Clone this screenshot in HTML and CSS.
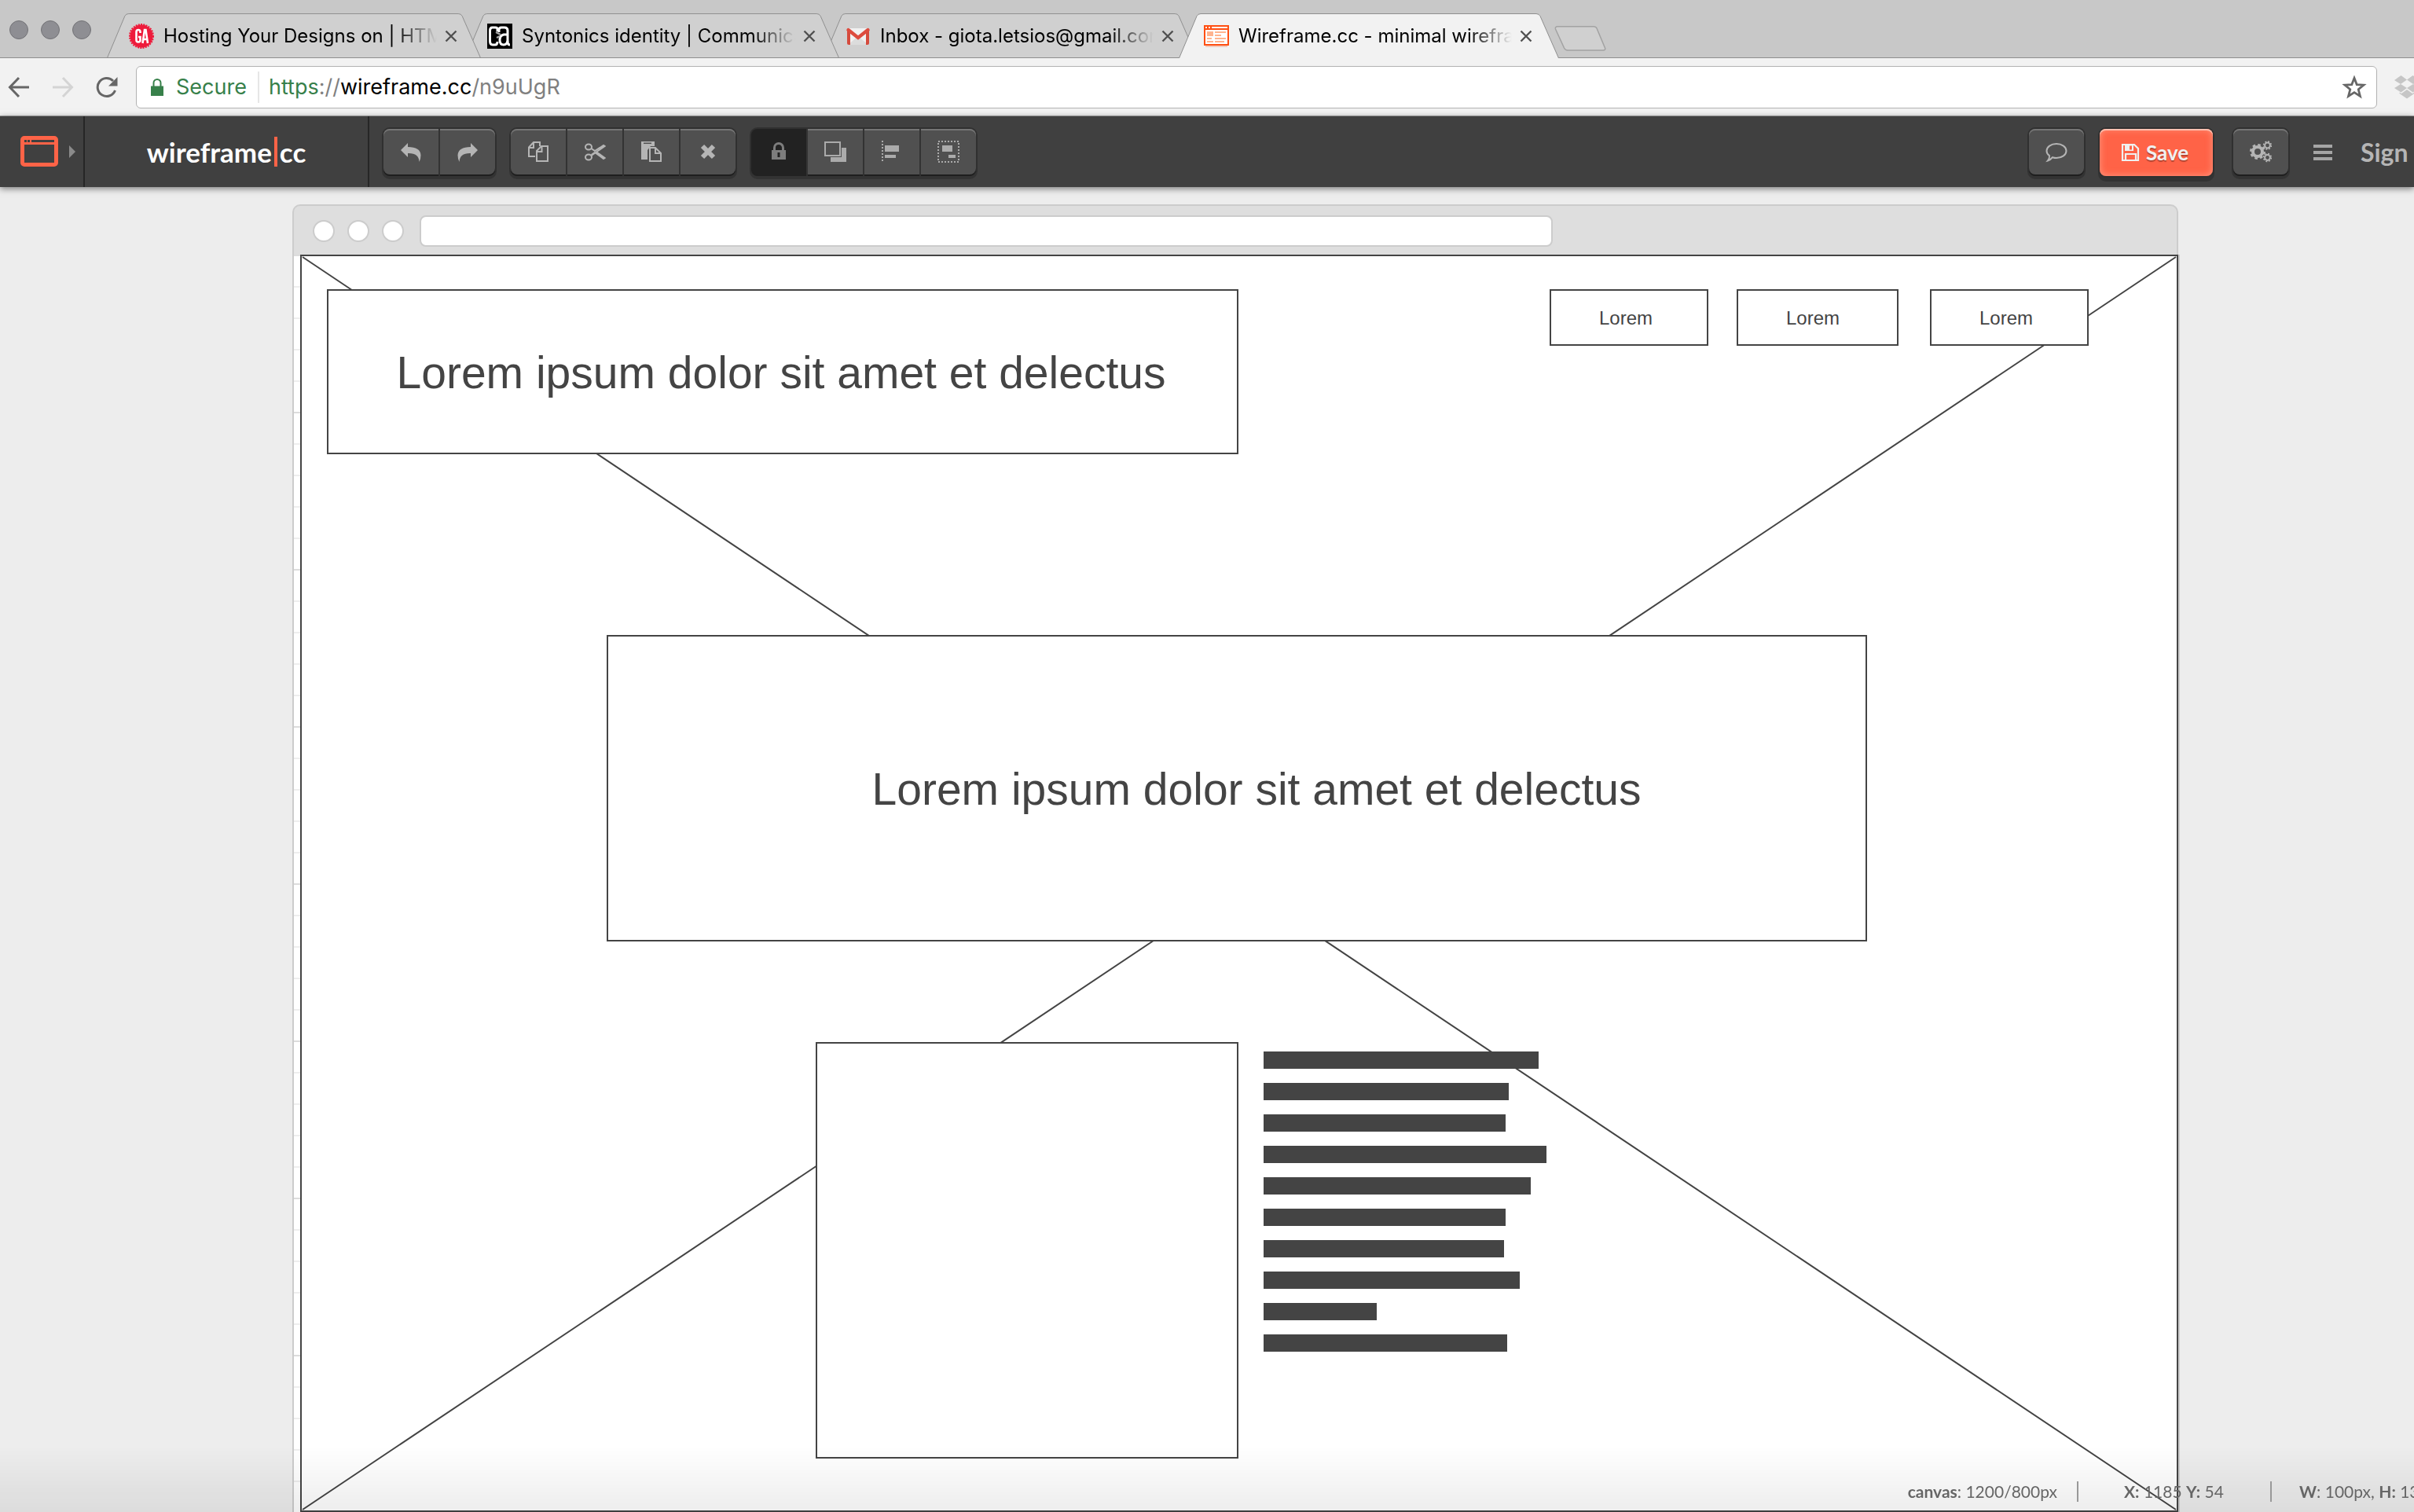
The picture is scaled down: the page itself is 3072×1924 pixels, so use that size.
FILE: index.html
```html
<!DOCTYPE html>
<html lang="en">
<head>
<meta charset="utf-8">
<title>Wireframe.cc - minimal wireframing tool</title>
<link rel="stylesheet" href="styles.css">
</head>
<body>
<svg class="defs" aria-hidden="true">
  <symbol id="tab-shape" viewBox="0 0 484 57"><path d="M.5 57L23 3.500Q24.500.5 28 .5H455Q458.500.5 460 3.500L483.500 57"/></symbol>
  <symbol id="close" viewBox="0 0 16 16"><path d="M1.500 1.500l13 13M14.500 1.500l-13 13" fill="none" stroke="#505050" stroke-width="2.400"/></symbol>
</svg>

<header class="browser">
  <div class="tab-strip">
    <div class="lights"><span></span><span></span><span></span></div>
    <nav class="tabs">
      <div class="tab">
        <svg class="tab-bg"><use href="#tab-shape"/></svg>
        <svg class="favicon" viewBox="0 0 32 32"><circle cx="16" cy="16" r="14.500" fill="#ee1b3b"/><circle cx="16" cy="16" r="15" fill="none" stroke="#ee1b3b" stroke-width="2" stroke-dasharray="2 1.300"/><g fill="none" stroke="#fff" stroke-width="2.600"><path d="M14.500 12v-1.500q0-2.500-2.500-2.500T9.500 10.500v10.500q0 2.500 2.500 2.500t2.500-2.500V17H12"/><path d="M17.500 25L20 8h1.500L24 25M18.500 20h4.500"/></g></svg>
        <a class="tab-title" href="#">Hosting Your Designs on | HTML</a>
        <button class="tab-close" aria-label="Close tab"><svg><use href="#close"/></svg></button>
      </div>
      <div class="tab">
        <svg class="tab-bg"><use href="#tab-shape"/></svg>
        <svg class="favicon" viewBox="0 0 32 32"><path d="M0 0h32v32H0z"/><g fill="none" stroke="#fff" stroke-width="3"><path d="M13 10V7q0-2-2.500-2H6.500Q3.500 5 3.500 9v13q0 5 3.500 5h3q3 0 3-4"/><path d="M15 11V8q0-3 3-3h4q4 0 4 4v14q0 4 3 4"/><path d="M26 14h-5q-5 1-5 7t5 6q4 0 5-5"/></g><path d="M11 11l6 3M12 18l4-2" stroke="#aaa" stroke-width="2"/></svg>
        <a class="tab-title" href="#">Syntonics identity | Communication</a>
        <button class="tab-close" aria-label="Close tab"><svg><use href="#close"/></svg></button>
      </div>
      <div class="tab">
        <svg class="tab-bg"><use href="#tab-shape"/></svg>
        <svg class="favicon" viewBox="0 0 32 32"><path d="M3 6h26v21H3z" fill="#f1f1f1"/><path d="M3 27l13-11 13 11z" fill="#dcdcdc"/><path d="M2 8v17q0 2 2 2h2V11zM30 8v17q0 2-2 2h-2V11z" fill="#d54b3d"/><path d="M3.500 8L16 18 28.500 8" fill="none" stroke="#dd4b3e" stroke-width="4.400" stroke-linecap="round"/></svg>
        <a class="tab-title" href="#">Inbox - giota.letsios@gmail.com</a>
        <button class="tab-close" aria-label="Close tab"><svg><use href="#close"/></svg></button>
      </div>
      <div class="tab active">
        <svg class="tab-bg"><use href="#tab-shape"/></svg>
        <svg class="favicon" viewBox="0 0 32 32"><path d="M2 28h28v2H2z" fill="#f3c9bb"/><path d="M0 2h32v26H0z" fill="#ff4f12"/><path d="M2 4h2v2H2zM6 4h2v2H6zM10 4h20v2H10zM2 8h28v18H2z" fill="#fff"/><path d="M4 10h8v6H4zM14 10h14v2H14zM14 14h8v2h-8zM4 18h6v2H4zM14 18h14v2H14zM4 22h8v2H4zM14 22h12v2H14z" fill="#ffb48f"/></svg>
        <a class="tab-title" href="#">Wireframe.cc - minimal wireframing</a>
        <button class="tab-close" aria-label="Close tab"><svg><use href="#close"/></svg></button>
      </div>
    </nav>
    <button class="new-tab" aria-label="New tab"><svg viewBox="0 0 66 32"><path d="M4 .8H50Q53 .8 54 3L64.500 28Q65.500 31 62 31H17Q14 31 12.500 28L1.500 4Q.8.8 4 .8z" fill="#d0d0d0" stroke="#a2a2a2" stroke-width="1.500"/></svg></button>
  </div>

  <div class="nav-bar">
    <button class="nav-btn" aria-label="Back"><svg viewBox="0 0 28 28"><path d="M27 14H3M14 2L2.500 14 14 26" fill="none" stroke="#666" stroke-width="3"/></svg></button>
    <button class="nav-btn" aria-label="Forward"><svg viewBox="0 0 28 28"><path d="M1 14h24M14 2l11.500 12L14 26" fill="none" stroke="#d4d4d4" stroke-width="3"/></svg></button>
    <button class="nav-btn" aria-label="Reload"><svg viewBox="0 0 28 28"><path d="M24.500 18A11.500 11.500 0 1 1 22 6" fill="none" stroke="#666" stroke-width="3"/><path d="M27.500 1v11.500H16z" fill="#666"/></svg></button>
    <div class="address">
      <svg class="lock" viewBox="0 0 18 22"><path d="M1 9.500h16V22H1z" fill="#37804a"/><path d="M4.500 10V5.500a4.500 4.500 0 0 1 9 0V10" fill="none" stroke="#37804a" stroke-width="2"/></svg>
      <span class="secure">Secure</span>
      <a class="url" href="#"><span class="scheme">https</span>://<span class="host">wireframe.cc</span>/n9uUgR</a>
      <button class="star" aria-label="Bookmark"><svg viewBox="0 0 30 30"><path d="M15 4l3 7.800 8.300.5-6.400 5.300 2.100 8.100L15 21.200l-7 4.500 2.100-8.100-6.400-5.300 8.300-.5z" fill="none" stroke="#666" stroke-width="2.600"/></svg></button>
    </div>
    <button class="extension" aria-label="Dropbox"><svg viewBox="0 0 34 32"><path d="M9.500 1L17 6.500 9 12 1 7zM24.500 1L17 6.500 25 12l8-5zM1 17l8-5 8 5-7.500 5.500zM33 17l-8-5-8 5 7.500 5.500zM17 19l7 5 2.500-1.500V24L17 30.500 7.500 24v-1.500L10 24z" fill="#c6c6c6"/></svg></button>
  </div>
</header>

<div class="app-bar">
  <button class="mode" aria-label="Window type"><svg viewBox="0 0 72 40"><rect x="2.500" y="2.500" width="43" height="34" rx="2.500" fill="none" stroke="#ff6347" stroke-width="5"/><path d="M2 2h44v9H2z" fill="#ff6347"/><path d="M5 5h3v3H5zM9 5h3v3H9zM14 5h29v3H14z" fill="#404040"/><path d="M62 12v16l8-8z" fill="#8a8a8a"/></svg></button>
  <a class="brand" href="#">wireframe<i></i>cc</a>
  <div class="tools">
    <div class="group">
      <button aria-label="Undo"><svg viewBox="0 0 28 28"><path d="M1 12L10 3v5q16 0 16.500 10.500Q26.500 23 24.500 27 24 15.500 10 16v5z"/></svg></button>
      <button aria-label="Redo"><svg viewBox="0 0 28 28"><path d="M27 12L18 3v5Q2 8 1.500 18.500 1.500 23 3.500 27 4 15.500 18 16v5z"/></svg></button>
    </div>
    <div class="group">
      <button aria-label="Copy"><svg class="line" viewBox="0 0 28 28"><path d="M10 20H2V8.500L8 2h8v5M8 2v7H2M12 26V13l6-6h8v19zM18.500 7v7H12"/></svg></button>
      <button aria-label="Cut"><svg class="line" viewBox="0 0 28 28"><ellipse cx="6" cy="8" rx="4" ry="3.500"/><ellipse cx="6" cy="21" rx="4" ry="3.500"/><path d="M9.500 10L14 13 25 6l1.500 1L9.500 19M9.500 18l4.500-3 11 8 1.500-1-11-8"/></svg></button>
      <button aria-label="Paste"><svg viewBox="0 0 28 28"><path d="M1 1h17v6h-5l-4 5v12H1z"/><path d="M4 3.300h10" stroke="#505050" stroke-width="1.500"/><path class="line" d="M12 26V9h7l7 7v10zM19 9v7h7"/></svg></button>
      <button aria-label="Delete"><svg viewBox="0 0 28 28"><path d="M7 7l14 14M21 7L7 21" stroke="#b5b5b5" stroke-width="6"/></svg></button>
    </div>
    <div class="group">
      <button class="on" aria-label="Lock"><svg viewBox="0 0 28 28"><path d="M5 12h18v12H5z" fill="#7d7d7d"/><path d="M8.500 13V9a5.500 5.500 0 0 1 11 0v4" fill="none" stroke="#7d7d7d" stroke-width="3"/><path d="M12.500 15h3v6h-3z" fill="#222"/></svg></button>
      <button aria-label="Arrange"><svg viewBox="0 0 28 28"><path d="M1 2h19v17H1z" fill="none" stroke="#ababab" stroke-width="2"/><path d="M22 9h6v18H8v-6h14z" fill="#ababab"/></svg></button>
      <button aria-label="Align"><svg viewBox="0 0 28 28"><path d="M2 0v28" stroke="#ababab" stroke-width="2" stroke-dasharray="2 2"/><path d="M5 6h18v8H5zM5 18h14v4H5z" fill="#ababab"/></svg></button>
      <button aria-label="Group"><svg viewBox="0 0 28 28"><path d="M1 1h26v26H1z" fill="none" stroke="#ababab" stroke-width="2" stroke-dasharray="2 2"/><path d="M6 6h13v8H6zM14 18h9v4h-9z" fill="#ababab"/></svg></button>
    </div>
  </div>
  <div class="actions">
    <div class="group"><button aria-label="Comment"><svg class="line" viewBox="0 0 28 28"><path d="M14 4c7 0 12.500 4 12.500 9S21 22 14 22c-2 0-3.500-.3-5-.8Q6.500 24.500 3 25.500 5.500 22.500 5 19C2.800 17.500 1.500 15.500 1.500 13 1.500 8 7 4 14 4z"/></svg></button></div>
    <button class="save"><svg viewBox="0 0 24 24"><path d="M2 2h15l5 5v15H2zM6 22v-8h13v8" fill="none" stroke="#f0f0f0" stroke-width="2.200"/><path d="M5 2h11v8H5z" fill="#f0f0f0"/><path d="M11 3.500h3v5h-3z" fill="#ff6347"/></svg>Save</button>
    <div class="group settings"><button aria-label="Settings"><svg viewBox="0 0 28 28"><g fill="none" stroke="#b5b5b5"><circle cx="10" cy="14" r="6" stroke-width="4"/><circle cx="10" cy="14" r="8.700" stroke-width="2.600" stroke-dasharray="3.600 3.230"/><circle cx="22.500" cy="6" r="3.400" stroke-width="2"/><circle cx="22.500" cy="6" r="4.900" stroke-width="1.600" stroke-dasharray="2 1.850"/><circle cx="22.500" cy="21.500" r="3.400" stroke-width="2"/><circle cx="22.500" cy="21.500" r="4.900" stroke-width="1.600" stroke-dasharray="2 1.850"/></g></svg></button></div>
    <button class="menu" aria-label="Menu"><span></span><span></span><span></span></button>
    <a class="sign-in" href="#">Sign in</a>
  </div>
</div>

<main class="workspace">
  <div class="frame-bar"><span class="dot"></span><span class="dot"></span><span class="dot"></span><span class="frame-url"></span></div>
  <div class="canvas">
    <svg class="backdrop" preserveAspectRatio="none" viewBox="0 0 2390 1600"><path d="M1 1L2389 1599M2389 1L1 1599"/></svg>
    <div class="node header-box">Lorem ipsum dolor sit amet et delectus</div>
    <div class="node link-box first">Lorem</div>
    <div class="node link-box second">Lorem</div>
    <div class="node link-box third">Lorem</div>
    <div class="node hero-box">Lorem ipsum dolor sit amet et delectus</div>
    <div class="node picture-box"></div>
    <div class="copy">
      <span style="width:350px"></span><span style="width:312px"></span><span style="width:308px"></span><span style="width:360px"></span><span style="width:340px"></span><span style="width:308px"></span><span style="width:306px"></span><span style="width:326px"></span><span style="width:144px"></span><span style="width:310px"></span>
    </div>
  </div>
</main>

<footer class="status">
  <span class="cell size"><b>canvas</b>: 1200/800px</span>
  <span class="cell pointer"><b>X:</b> 1185 <b>Y:</b> 54</span>
  <span class="cell selection"><b>W</b>: 100px, <b>H:</b> 135px</span>
</footer>
</body>
</html>
```
FILE: styles.css
```css
* { box-sizing: border-box; }
body { margin: 0; min-height: 100vh; background: #ededed; overflow-x: hidden; font-family: Lato, sans-serif; }
button { margin: 0; padding: 0; border: 0; background: none; font: inherit; color: inherit; }
a { color: inherit; text-decoration: none; }
svg { display: block; flex: none; }
.defs { position: absolute; width: 0; height: 0; }

/* Browser chrome */
.browser { font-family: Inter, sans-serif; }
.tab-strip { display: flex; height: 74px; padding-left: 12px; background: #c8c8c8; box-shadow: inset 0 -1px #8e8e8e; }
.lights { display: flex; gap: 16px; width: 120px; padding-top: 26px; }
.lights span { width: 24px; height: 24px; border: 1px solid #727276; border-radius: 50%; background: #8e8e93; }
.tabs { display: flex; align-items: flex-end; }
.tab { position: relative; display: flex; align-items: center; width: 484px; height: 57px; margin-right: -28px; padding: 0 34px 0 32px; z-index: 1; }
.tab:nth-child(1) { z-index: 3; }
.tab:nth-child(2) { z-index: 2; }
.tab.active { z-index: 4; }
.tab-bg { position: absolute; inset: 0; width: 484px; height: 56px; fill: #d0d0d0; stroke: #8e8e8e; z-index: -1; }
.active .tab-bg { height: 57px; fill: #f2f2f2; }
.favicon { width: 32px; height: 32px; }
.tab-title { flex: 1; margin: 0 10px 0 12px; overflow: hidden; white-space: nowrap; font-size: 24px; line-height: 32px; color: #000; -webkit-mask-image: linear-gradient(90deg, #000 84%, transparent); mask-image: linear-gradient(90deg, #000 84%, transparent); }
.tab-close svg { width: 16px; height: 16px; }
.new-tab { align-self: flex-start; margin: 33px 0 0 22px; }
.new-tab svg { width: 66px; height: 32px; }
.nav-bar { display: flex; align-items: center; height: 74px; padding-left: 10px; overflow: hidden; background: #f2f2f2; border-bottom: 1px solid #a8a8a8; }
.nav-btn { width: 28px; margin-right: 28px; }
.nav-btn svg { width: 28px; height: 28px; }
.nav-btn + .nav-btn + .nav-btn { margin-right: 23px; }
.address { flex: 1; display: flex; align-items: center; height: 54px; padding: 0 12px 0 17px; background: #fff; border: 1px solid #b2b2b2; border-radius: 6px; font-size: 27px; line-height: 40px; }
.lock { width: 18px; height: 22px; }
.secure { margin-left: 15px; padding-right: 14px; border-right: 2px solid #e6e6e6; color: #37804a; }
.url { flex: 1; margin-left: 12px; color: #808080; }
.scheme { color: #37804a; }
.host { color: #000; }
.star svg { width: 32px; height: 32px; }
.extension { width: 26px; margin-left: 21px; }
.extension svg { width: 34px; height: 32px; }

/* Application toolbar */
.app-bar { position: relative; display: flex; align-items: stretch; height: 90px; overflow: clip; overflow-clip-margin: 10px; background: #404040; box-shadow: 0 2px 8px rgba(0, 0, 0, .5); color: #fff; }
.mode { width: 108px; padding-left: 26px; border-right: 2px solid #262626; }
.mode svg { width: 72px; height: 40px; }
.brand { display: flex; align-items: center; justify-content: center; width: 362px; border-right: 2px solid #262626; font-size: 35px; line-height: 40px; font-weight: 700; }
.brand i { width: 4px; height: 38px; margin: 0 3px; background: #ff6347; }
.tools, .actions { display: flex; align-items: flex-start; gap: 20px; padding-top: 16px; }
.tools { padding-left: 18px; }
.group { display: flex; gap: 2px; height: 58px; border-radius: 8px; background: #333; box-shadow: 0 0 0 2px #303030, 0 4px 0 2px #333; }
.group button { display: flex; align-items: center; justify-content: center; width: 70px; background: #505050; box-shadow: inset 0 2px #757575, 0 2px #1e1e1e; }
.group button:first-child { border-radius: 8px 0 0 8px; }
.group button:last-child { border-radius: 0 8px 8px 0; }
.group button:only-child { border-radius: 8px; }
.group svg { width: 28px; height: 28px; fill: #b5b5b5; }
.group svg.line, .group path.line { fill: none; stroke: #b5b5b5; stroke-width: 2; }
.group path.line { fill: #505050; }
.group .on { background: #222; box-shadow: 0 2px #222; }
.actions { margin-left: auto; }
.save { display: flex; align-items: center; justify-content: center; gap: 8px; width: 144px; height: 60px; padding-right: 4px; border-radius: 8px; background: #ff6347; box-shadow: inset 0 2px #ffc0b0, inset 0 0 10px rgba(255, 190, 170, .6), 0 0 0 2px #303030, 0 5px 0 2px #333; color: #f0f0f0; font-size: 26px; font-weight: 700; text-shadow: 0 2px 1px rgba(0, 0, 0, .3); }
.save svg { width: 24px; height: 24px; }
.settings { margin-left: 6px; }
.menu { display: flex; flex-direction: column; gap: 4px; margin: 20px 0 0 12px; }
.menu span { width: 24px; height: 4px; background: #a5a5a5; }
.sign-in { width: 68px; margin: 10px 0 0 16px; white-space: nowrap; font-size: 32px; line-height: 40px; font-weight: 700; color: #b5b5b5; }

/* Wireframe */
.workspace { padding: 22px 298px 0 372px; }
.frame-bar { display: flex; align-items: center; gap: 16px; height: 64px; margin-right: 2px; padding: 4px 24px 2px; background: #dedede; border: 2px solid #ccc; border-bottom: 0; border-radius: 10px 10px 0 0; }
.dot { width: 28px; height: 28px; border: 2px solid #ccc; border-radius: 50%; background: #fff; }
.frame-url { width: 1442px; height: 40px; margin-left: 4px; border: 2px solid #ccc; border-radius: 8px; background: #fff; }
.canvas { position: relative; height: 1600px; border: 2px solid #ccc; border-width: 0 2px 0 2px; background: repeating-linear-gradient(transparent 0 198px, #dcdcdc 198px 200px), repeating-linear-gradient(#fff 0 38px, #eee 38px 40px); background-position: 0 2px; font-family: "Liberation Sans", Arial, sans-serif; color: #444; }
.backdrop { position: absolute; left: 8px; top: 0; width: calc(100% - 8px); height: 1600px; background: #fff; border: 2px solid #444; fill: none; stroke: #444; stroke-width: 2; }
.node { position: absolute; display: flex; align-items: center; justify-content: center; padding-top: 2px; white-space: nowrap; background: #fff; border: 2px solid #444; }
.header-box { left: 42px; top: 44px; width: 1160px; height: 210px; padding-right: 4px; font-size: 57px; }
.link-box { top: 44px; height: 72px; width: 202px; padding-right: 8px; font-size: 24px; }
.first { left: 1598px; }
.second { left: 1836px; width: 206px; padding-right: 12px; }
.third { left: 2082px; }
.hero-box { left: 398px; top: 484px; width: 1604px; height: 390px; padding-left: 50px; font-size: 57px; }
.picture-box { left: 664px; top: 1002px; width: 538px; height: 530px; }
.copy { position: absolute; left: 1234px; top: 1014px; display: grid; gap: 18px; }
.copy span { height: 22px; background: #444; }

/* Status line over the canvas */
.status { position: fixed; left: 0; right: 0; bottom: 0; display: flex; justify-content: flex-end; align-items: flex-end; height: 84px; padding-bottom: 13px; overflow: hidden; background: linear-gradient(transparent, rgba(0, 0, 0, .07)); font-size: 21px; line-height: 26px; color: #666; white-space: nowrap; }
.cell { border-right: 2px solid #999; }
.size { padding-right: 25px; }
.pointer { width: 246px; padding-left: 58px; }
.selection { width: 181px; padding-left: 35px; border: 0; }
```
